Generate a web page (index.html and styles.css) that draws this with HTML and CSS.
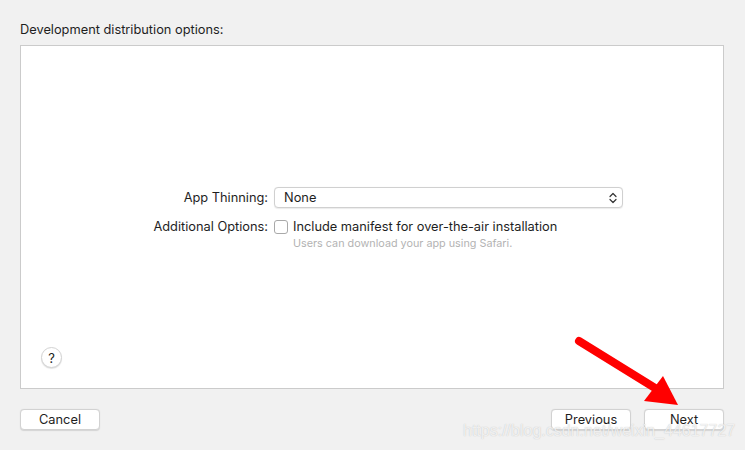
FILE: index.html
```html
<!DOCTYPE html>
<html>
<head>
<meta charset="utf-8">
<link rel="stylesheet" href="styles.css">
</head>
<body>
<div class="page">
  <div class="title">Development distribution options:</div>
  <div class="panel">
    <div class="form">
      <div class="row">
        <div class="label">App Thinning:</div>
        <div class="popup">
          <span>None</span>
          <svg class="chev" width="8" height="12" viewBox="0 0 8 12"><path d="M1 4.5 L4 1.5 L7 4.5 M1 7.5 L4 10.5 L7 7.5" fill="none" stroke="#333" stroke-width="1.2" stroke-linecap="round" stroke-linejoin="round"/></svg>
        </div>
      </div>
      <div class="row row2">
        <div class="label">Additional Options:</div>
        <div class="opt">
          <div class="checkline"><span class="check"></span><span>Include manifest for over-the-air installation</span></div>
          <div class="hint">Users can download your app using Safari.</div>
        </div>
      </div>
    </div>
    <div class="help">?</div>
  </div>
  <div class="buttons">
    <button class="btn">Cancel</button>
    <div class="right">
      <button class="btn">Previous</button>
      <button class="btn">Next</button>
    </div>
  </div>
</div>
<svg class="arrow" width="745" height="450" viewBox="0 0 745 450">
  <line x1="579" y1="341" x2="655" y2="388" stroke="#ff0000" stroke-width="8" stroke-linecap="round"/>
  <polygon points="663,376 678,405 644,401" fill="#ff0000"/>
</svg>
<div class="watermark">https://blog.csdn.net/weixin_44617727</div>
</body>
</html>
```
FILE: styles.css
```css
html, body { margin: 0; padding: 0; }
body {
  width: 745px; height: 450px; overflow: hidden;
  background: #f1f1f1;
  font-family: Inter, "Liberation Sans", Arial, sans-serif;
  font-size: 12.8px; color: #1e1e1e;
  position: relative;
}
.page { padding: 21px 21px 0 20px; display: flex; flex-direction: column; }
.title { height: 24px; line-height: 17px; }
.panel {
  height: 342px; background: #fff; border: 1px solid #cbcbcb;
  position: relative; display: flex; flex-direction: column; align-items: stretch;
}
.form { padding: 141px 0 0 0; display: flex; flex-direction: column; }
.row { display: flex; align-items: center; }
.label { width: 253px; text-align: right; padding-right: 6px; box-sizing: border-box; }
.popup {
  width: 349px; height: 21px; box-sizing: border-box;
  border: 1px solid #d0d0d0; border-radius: 4px; background: #fff;
  display: flex; align-items: center; justify-content: space-between;
  padding: 0 4px 0 9px; box-shadow: 0 0.5px 1px rgba(0,0,0,0.08);
}
.chev { margin-right: 1px; }
.row2 { align-items: flex-start; margin-top: 10px; }
.row2 .label { line-height: 17px; }
.opt { display: flex; flex-direction: column; }
.checkline { display: flex; align-items: center; line-height: 17px; }
.check {
  width: 12px; height: 12px; border: 1px solid #a9a9a9; border-radius: 3px;
  background: #fff; margin-right: 5px; box-sizing: content-box;
}
.hint { font-size: 10.8px; color: #b3b3b3; padding-left: 19px; line-height: 13px; margin-top: 2px; }
.help {
  position: absolute; left: 20px; top: 301px;
  width: 19px; height: 19px; border-radius: 50%; border: 1px solid #d3d3d3;
  box-shadow: 0 1px 1px rgba(0,0,0,0.12);
  display: flex; align-items: center; justify-content: center;
  font-size: 13px; color: #222; background: #fff;
}
.buttons { display: flex; justify-content: space-between; margin-top: 20px; }
.right { display: flex; gap: 13px; }
.btn {
  width: 80px; height: 21px; padding: 0;
  background: #fff; border: 1px solid #d2d2d2; border-radius: 4px;
  box-shadow: 0 0.5px 1px rgba(0,0,0,0.12);
  font-family: Inter, "Liberation Sans", Arial, sans-serif; font-size: 12.8px; color: #1e1e1e;
}
.arrow { position: absolute; left: 0; top: 0; pointer-events: none; }
.watermark {
  position: absolute; left: 463px; top: 422px;
  font-family: "Liberation Sans", Arial, sans-serif;
  font-size: 16px; color: rgba(255,255,255,0.75);
  text-shadow: 0 0 1px rgba(150,150,150,0.6);
  white-space: nowrap;
}
```
